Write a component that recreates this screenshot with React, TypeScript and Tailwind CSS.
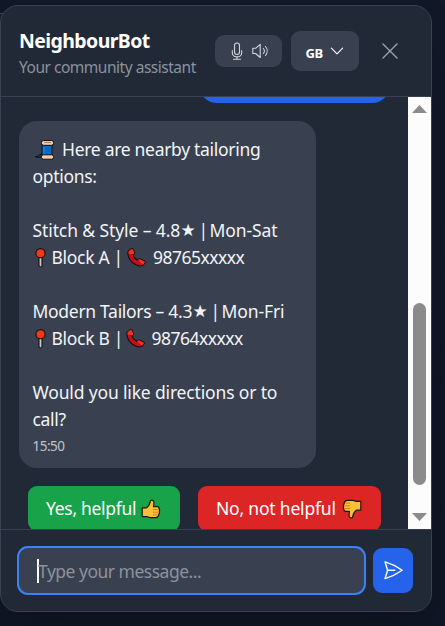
import React from "react";

const strokeProps = {
  fill: "none",
  stroke: "currentColor",
  strokeLinecap: "round" as const,
  strokeLinejoin: "round" as const,
};

function MicIcon() {
  return (
    <svg className="h-[18px] w-[12px]" viewBox="0 0 12 18" {...strokeProps} strokeWidth="1.1">
      <rect x="3.5" y="1" width="5" height="11.5" rx="2.5" />
      <path d="M1.3 8.5v2.2a4 4 0 0 0 4 4h1.400a4 4 0 0 0 4-4V8.500M6 14.700v2.500M2.500 17.200h7" />
    </svg>
  );
}

function SpeakerIcon() {
  return (
    <svg className="h-[18px] w-[18px]" viewBox="0 0 18 18" {...strokeProps} strokeWidth="1.1">
      <path d="M1.800 6.300h2.800l4.600-4v13.200l-4.600-4H1.800zM12.300 6.500a3.700 3.700 0 0 1 0 5M14.500 4.500a7 7 0 0 1 0 9" />
    </svg>
  );
}

function ThreadIcon() {
  return (
    <svg className="h-[22px] w-[22px]" viewBox="0 0 22 22" stroke="#101010" strokeWidth="1" strokeLinejoin="round">
      <path d="M2 17.600c3 .3 4-1.500 6.500-3v3c-2 1-4 1.300-6.500 0z" fill="#123d70" />
      <path d="M9 4h10v14H9z" fill="#0868c4" />
      <rect x="8.500" y="1.500" width="12" height="4.800" rx="2" fill="#f6cdb0" />
      <path d="M11 3.500h7" stroke="#a77d62" />
      <rect x="8.500" y="15.800" width="12" height="4.400" rx="1.800" fill="#f6cdb0" />
      <path d="M11 8v7" stroke="#2c8de0" />
    </svg>
  );
}

function PinIcon() {
  return (
    <svg className="h-[20px] w-[11px]" viewBox="0 0 11 20" stroke="#111" strokeWidth="1.1">
      <path d="M4 9h3v8.500q-1.500 3-3 0z" fill="#c7c7c7" />
      <circle cx="5.500" cy="5.200" r="4.600" fill="#f03a17" />
    </svg>
  );
}

function PhoneIcon() {
  return (
    <svg className="h-[19px] w-[19px]" viewBox="0 0 19 19" stroke="#160c10" strokeWidth="1.1" strokeLinejoin="round">
      <path d="M1.200 3.100 4.500.8q1-.5 1.600.6l1.500 3.100q.4 1.200-1.600 2.200.9 3.600 4.500 5.500 1.500-1.900 2.700-1.200l4.500 2.300q1 .7.2 1.700l-2 2.300q-2.400 1.500-6.900-.5C3.500 14.300 0 8.500 1.200 3.100z" fill="#c70d18" />
      <path d="M1.600 3.200 4.500 1q.8-.4 1.300.5l1.400 3q.2.9-1.100 1.500-2.800.2-4.400 0zM11.200 12.200q1.200-1.400 2.100-.8l4.100 2.100q.8.600.2 1.300l-1.800 2z" fill="#f0331d" stroke="none" />
    </svg>
  );
}

function ThumbIcon() {
  return (
    <svg className="h-[20px] w-[20px]" viewBox="0 0 20 20" fill="#fdbf36" stroke="#19170d" strokeWidth="1.2" strokeLinejoin="round">
      <path d="M1.200 8.800h4.300Q8.600 6.800 9.300 2.200C9.600.6 12.700.5 13 3.500L12.500 7.600h4q2 .5 1.600 2.300 1 1.200.2 2.600.6 1.500-.4 2.600.1 1.800-1.200 2.500-.6 1-2 1H9.500q-2-.1-3.500-1H1.200z" />
      <path d="M12 10.500h5.500M12 13.200h5.500M12 15.800h4.500" stroke="#c77c1c" strokeWidth=".9" />
    </svg>
  );
}

function Line({ children }: { children?: React.ReactNode }) {
  return <div className="flex h-[27px] items-center whitespace-pre">{children}</div>;
}

interface ListingProps {
  name: string;
  days: string;
  block: string;
  phone: string;
  nameClass: string;
  blockClass: string;
}

function Listing({ name, days, block, phone, nameClass, blockClass }: ListingProps) {
  return (
    <>
      <Line>
        <span className={nameClass}>{name}</span>
        <span className="w-[18px] shrink-0 font-['DejaVu_Sans'] text-[17px] leading-none tracking-normal">★</span>
        <span className="w-[11px] shrink-0">|</span>
        <span className="tracking-[-0.1px]">{days}</span>
      </Line>
      <Line>
        <span className="flex w-[19px] shrink-0 pl-[2px]"><PinIcon /></span>
        <span className={blockClass}>{block} |</span>
        <span className="w-[26px] shrink-0"><PhoneIcon /></span>
        <span className="tracking-[-0.5px]">{phone}</span>
      </Line>
    </>
  );
}

export default function App() {
  return (
    <div className="relative h-[626px] w-[445px] overflow-hidden bg-[#111827] bg-linear-to-b from-[#121828] to-[#101625] pt-[5px] font-['Noto_Sans','Segoe_UI',sans-serif]">
      <div className="absolute top-[13px] left-0 h-6 w-3 border-t border-[#374151] bg-[#1a2231]" />
      <div className="relative flex h-[607px] w-[432px] flex-col overflow-hidden rounded-[18px] border border-[#374151] bg-[#212936] shadow-2xl">
        <header className="flex h-[91px] shrink-0 items-center border-b border-[#374151] pl-[18px]">
          <div className="w-[196px] shrink-0 pt-[4px] whitespace-nowrap">
            <h1 className="text-[19.500px] leading-[28px] font-bold tracking-[-0.6px] text-white">NeighbourBot</h1>
            <p className="text-[15.500px] leading-[24px] tracking-[-0.48px] text-[#8b929e]">Your community assistant</p>
          </div>
          <div className="flex h-8 w-[67px] items-center gap-2 rounded-[9px] bg-[#394150] pl-4 text-[#d1d5db]">
            <MicIcon />
            <SpeakerIcon />
          </div>
          <button className="ml-[9px] flex h-10 w-[68px] items-center gap-[5px] rounded-[9px] bg-[#394150] pl-[14px] text-white">
            <span className="w-[18px] pt-[3px] text-[13px] leading-5 font-bold tracking-[-0.5px]">GB</span>
            <svg className="h-[18px] w-[18px]" viewBox="0 0 24 24" {...strokeProps} strokeWidth="1.500">
              <path d="m19.500 8.250-7.500 7.500-7.500-7.500" />
            </svg>
          </button>
          <button className="ml-[19px] text-[#9ca3af]">
            <svg className="h-[24px] w-[24px]" viewBox="0 0 24 24" {...strokeProps} strokeWidth="1.4">
              <path d="M5 5l14 14M19 5 5 19" />
            </svg>
          </button>
        </header>

        <div className="flex h-[432px] shrink-0">
          <main className="flex w-[407px] flex-col overflow-hidden pl-[18px]">
            <div className="-mt-[39px] ml-[180px] h-[45px] w-[191px] shrink-0 rounded-[18px] bg-[#2563eb]" />
            <div className="mt-[18px] h-[347px] w-[297px] shrink-0 rounded-[18px] bg-[#394150] px-[13.500px] pt-[15px] text-[17.500px] tracking-[-0.3px] text-[#f3f4f6]">
              <Line>
                <span className="w-[29.500px] shrink-0"><ThreadIcon /></span>
                <span>Here are nearby tailoring</span>
              </Line>
              <Line>options:</Line>
              <Line />
              <Listing name="Stitch & Style – 4.8" days="Mon-Sat" block="Block A" phone="98765xxxxx" nameClass="w-[148px] shrink-0 tracking-[-0.1px]" blockClass="w-[75.500px] shrink-0" />
              <Line />
              <Listing name="Modern Tailors – 4.3" days="Mon-Fri" block="Block B" phone="98764xxxxx" nameClass="w-[160px] shrink-0" blockClass="w-[74px] shrink-0" />
              <Line />
              <Line><span className="tracking-[-0.160px]">Would you like directions or to</span></Line>
              <Line>call?</Line>
              <div className="mt-[4px] text-[13.500px] leading-[18px] tracking-[-0.5px] text-[#c0c4ca]">15:50</div>
            </div>
            <div className="mt-[18px] ml-[9px] flex shrink-0 gap-[18px] text-[17.500px] tracking-[-0.3px] whitespace-nowrap text-white">
              <button className="flex h-[45px] w-[152px] items-center rounded-[9px] bg-[#18a34a] pl-[18px]">
                <span className="w-[95px] text-left">Yes, helpful</span>
                <ThumbIcon />
              </button>
              <button className="flex h-[45px] w-[183px] items-center rounded-[9px] bg-[#dc2626] pl-[18px]">
                <span className="w-[126px] text-left tracking-[-0.2px]">No, not helpful</span>
                <span className="rotate-180"><ThumbIcon /></span>
              </button>
            </div>
          </main>
          <div className="flex w-[23px] flex-col items-center bg-[#fcfcfc]">
            <svg className="mt-[8px] h-[8px] w-[15px]" viewBox="0 0 15 8"><path d="M0 8 7.500 0 15 8z" fill="#8b8b8b" /></svg>
            <div className="mt-[190px] h-[182px] w-[13px] rounded-full bg-[#8b8b8b]" />
            <svg className="mt-[28px] h-[8px] w-[15px]" viewBox="0 0 15 8"><path d="M0 0 7.500 8 15 0z" fill="#8b8b8b" /></svg>
          </div>
        </div>

        <footer className="flex flex-1 items-center gap-[7px] border-t border-[#374151] pl-[16px]">
          <div className="flex h-[49px] w-[349px] items-center rounded-[11px] border-2 border-[#3b82f6] bg-[#394150] pl-[18px] text-[17.500px] tracking-[-0.5px] text-[#8b929e]">
            <span className="h-[24px] w-[2px] bg-white" />
            <span className="-ml-px pt-px">Type your message...</span>
          </div>
          <button className="flex h-[45px] w-10 items-center justify-center rounded-[9px] bg-[#2563eb] text-white">
            <svg className="h-[22.500px] w-[22.500px]" viewBox="0 0 24 24" {...strokeProps} strokeWidth="1.500">
              <path d="M6 12 3.269 3.126A59.768 59.768 0 0 1 21.485 12 59.770 59.770 0 0 1 3.270 20.876L5.999 12Zm0 0h7.500" />
            </svg>
          </button>
        </footer>
      </div>
    </div>
  );
}
